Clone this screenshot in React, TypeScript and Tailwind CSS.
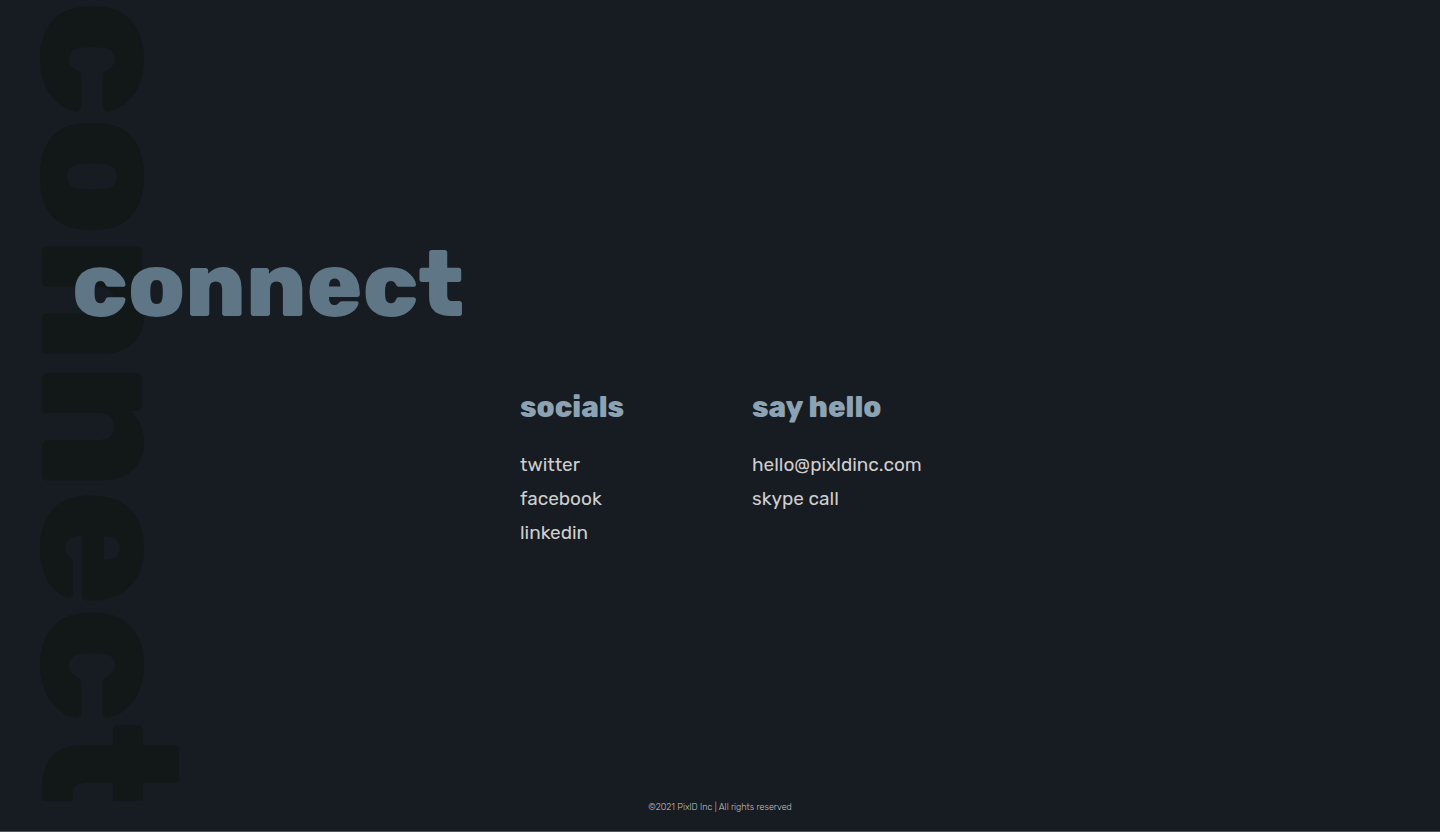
type LinkItem = { label: string; href: string };

const groups: { title: string; links: LinkItem[] }[] = [
  {
    title: 'socials',
    links: [
      { label: 'twitter', href: '#twitter' },
      { label: 'facebook', href: '#facebook' },
      { label: 'linkedin', href: '#linkedin' },
    ],
  },
  {
    title: 'say hello',
    links: [
      { label: 'hello@pixldinc.com', href: 'mailto:hello@pixldinc.com' },
      { label: 'skype call', href: '#skype' },
    ],
  },
];

function LinkGroup({ title, links }: { title: string; links: LinkItem[] }) {
  return (
    <section>
      <h2 className="text-[29px] leading-9 font-extrabold text-[#8ba3b3]">{title}</h2>
      <ul className="mt-[23px] text-[19px] leading-[34px] text-[#cfcfcf]">
        {links.map((link) => (
          <li key={link.label}>
            <a href={link.href} className="whitespace-nowrap hover:text-white">
              {link.label}
            </a>
          </li>
        ))}
      </ul>
    </section>
  );
}

export default function App() {
  return (
    <div className="relative flex min-h-screen flex-col border-b border-[#555560] bg-[#171b22] font-[Rubik,Roboto,sans-serif]">
      <div
        aria-hidden="true"
        className="absolute top-0 bottom-[30px] left-0 overflow-hidden text-[192px] leading-[216px] font-extrabold text-[#121718] select-none [writing-mode:vertical-rl]"
      >
        connect
      </div>
      <main className="relative grow pt-[235px] pl-[72px]">
        <h1 className="text-[92px] leading-[100px] font-extrabold text-[#5e7686]">connect</h1>
        <div className="mt-[54px] ml-[448px] grid w-fit grid-cols-[168px_auto] gap-16">
          {groups.map((group) => (
            <LinkGroup key={group.title} {...group} />
          ))}
        </div>
      </main>
      <footer className="relative pb-4 text-center text-[9px] leading-4 font-light text-[#c0c2c4]">
        ©2021 PixlD Inc | All rights reserved
      </footer>
    </div>
  );
}
